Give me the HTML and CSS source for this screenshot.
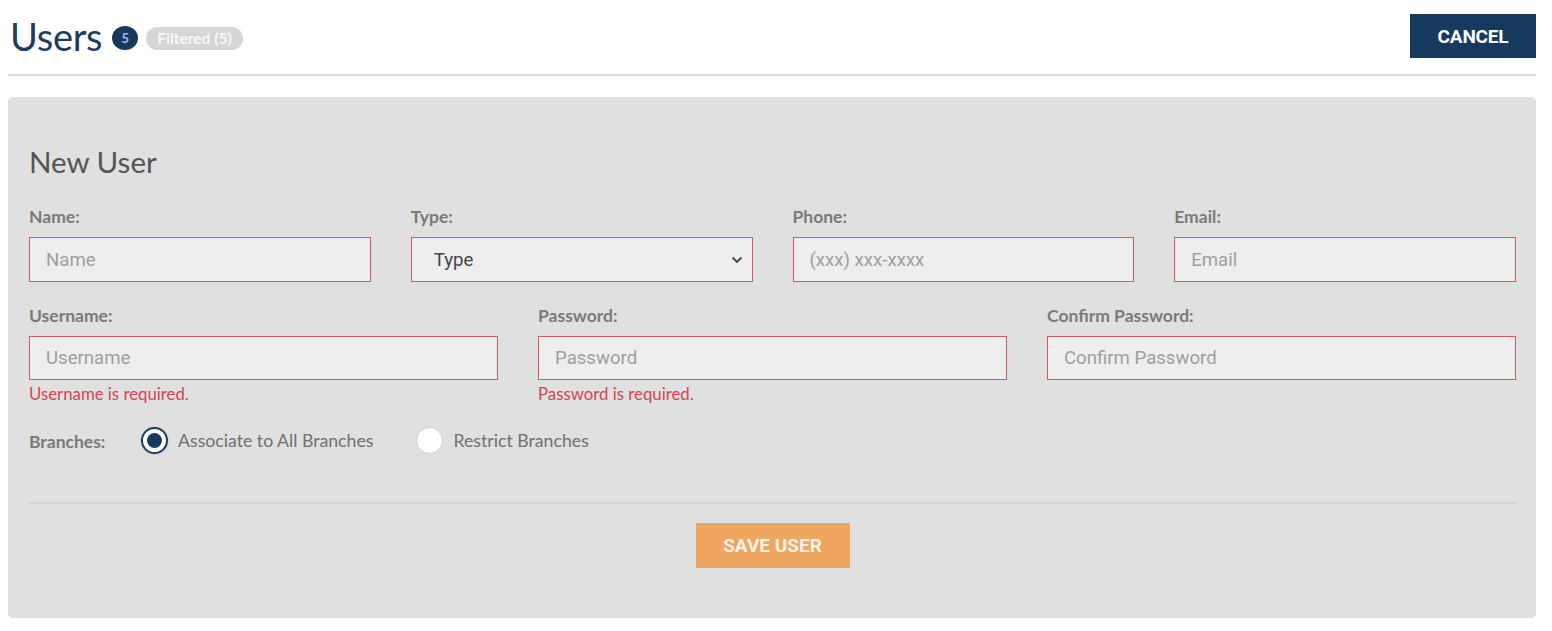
FILE: index.html
```html
<!DOCTYPE html>
<html>
<head>
<meta charset="utf-8">
<link rel="stylesheet" href="styles.css">
</head>
<body>
<div class="page">
  <header class="topbar">
    <div class="title-group">
      <h1 class="title">Users</h1>
      <span class="count-badge">5</span>
      <span class="filter-pill">Filtered (5)</span>
    </div>
    <button class="btn btn-cancel">CANCEL</button>
  </header>
  <section class="panel">
    <h2 class="panel-title">New User</h2>
    <div class="row row-4">
      <div class="field">
        <label class="label">Name:</label>
        <input class="input invalid" placeholder="Name">
      </div>
      <div class="field">
        <label class="label">Type:</label>
        <div class="select invalid">
          <span class="select-text">Type</span>
          <svg class="chev" width="12" height="8" viewBox="0 0 12 8"><path d="M1.5 1.5 L6 6 L10.5 1.5" fill="none" stroke="#444" stroke-width="1.8"/></svg>
        </div>
      </div>
      <div class="field">
        <label class="label">Phone:</label>
        <input class="input invalid" placeholder="(xxx) xxx-xxxx">
      </div>
      <div class="field">
        <label class="label">Email:</label>
        <input class="input invalid" placeholder="Email">
      </div>
    </div>
    <div class="row row-3">
      <div class="field">
        <label class="label">Username:</label>
        <input class="input invalid" placeholder="Username">
        <div class="error">Username is required.</div>
      </div>
      <div class="field">
        <label class="label">Password:</label>
        <input class="input invalid" placeholder="Password">
        <div class="error">Password is required.</div>
      </div>
      <div class="field">
        <label class="label">Confirm Password:</label>
        <input class="input invalid" placeholder="Confirm Password">
      </div>
    </div>
    <div class="branches">
      <span class="label branches-label">Branches:</span>
      <label class="radio-opt">
        <span class="radio checked"><span class="dot"></span></span>
        <span class="radio-text">Associate to All Branches</span>
      </label>
      <label class="radio-opt">
        <span class="radio"></span>
        <span class="radio-text">Restrict Branches</span>
      </label>
    </div>
    <div class="divider"></div>
    <div class="actions">
      <button class="btn btn-save">SAVE USER</button>
    </div>
  </section>
</div>
</body>
</html>
```

FILE: styles.css
```css
* { box-sizing: border-box; }
html, body { margin: 0; padding: 0; background: #fff; }
body { font-family: "Lato", "Open Sans", sans-serif; color: #555; }
.page { padding: 0 16px 0 8px; }

.topbar {
  display: flex;
  justify-content: space-between;
  align-items: center;
  padding: 14px 0 16px 2px;
  border-bottom: 2px solid #d6d6d6;
}
.title-group { display: flex; align-items: center; }
.title {
  margin: 0;
  font-size: 38px;
  font-weight: 400;
  color: #1d3d5e;
  line-height: 44px;
  letter-spacing: -0.3px;
}
.count-badge {
  display: inline-flex;
  align-items: center;
  justify-content: center;
  width: 26px;
  height: 24px;
  border-radius: 50%;
  background: #163a5f;
  color: #9fc1e4;
  font-size: 13px;
  font-weight: 700;
  margin-left: 10px;
  margin-top: 4px;
}
.filter-pill {
  display: inline-flex;
  align-items: center;
  height: 23px;
  padding: 0 11px;
  border-radius: 12px;
  background: #d6d6d6;
  color: #f6f6f6;
  font-size: 15.5px;
  font-weight: 700;
  margin-left: 8px;
  margin-top: 4px;
}
.btn {
  border: none;
  font-family: "Roboto", sans-serif;
  font-weight: 700;
  font-size: 19px;
  color: #fff;
  cursor: pointer;
}
.btn-cancel {
  background: #163a5f;
  width: 126px;
  height: 44px;
  letter-spacing: -0.2px;
}

.panel {
  margin-top: 21px;
  background: #e0e0e0;
  border-radius: 5px;
  padding: 48px 20px 50px 21px;
}
.panel-title {
  margin: 0 0 28px;
  font-size: 29.5px;
  font-weight: 400;
  color: #555;
  line-height: 34px;
}
.row { display: grid; column-gap: 40px; }
.row-4 { grid-template-columns: repeat(4, 1fr); margin-bottom: 24px; }
.row-3 { grid-template-columns: repeat(3, 1fr); }
.field { display: flex; flex-direction: column; }
.label {
  font-size: 17.5px;
  font-weight: 700;
  color: #7a7a7a;
  line-height: 20px;
  margin-bottom: 10px;
}
.input, .select {
  height: 45px;
  background: #eeeeee;
  border: 1px solid #d65a5c;
  font-family: "Roboto", sans-serif;
  font-size: 18.6px;
  color: #444;
  padding: 0 16px;
  outline: none;
  width: 100%;
}
.row-3 .input { height: 44px; }
.input::placeholder { color: #9e9e9e; }
.select {
  display: flex;
  align-items: center;
  justify-content: space-between;
  padding: 0 9px 0 22px;
}
.select-text { color: #444; }
.error {
  color: #d5454f;
  font-size: 16.8px;
  line-height: 20px;
  margin-top: 4px;
}
.branches {
  display: flex;
  align-items: center;
  margin-top: 22px;
  height: 28px;
}
.branches-label { margin: 4px 0 0 0; width: 112px; }
.radio-opt { display: flex; align-items: center; margin-right: 43px; }
.radio {
  width: 27px;
  height: 27px;
  border-radius: 50%;
  background: #fff;
  border: 1px solid #cfcfcf;
  display: inline-flex;
  align-items: center;
  justify-content: center;
}
.radio.checked { border: 2px solid #1d3d5e; box-shadow: 0 0 0 1px #c9d2dc; }
.dot { width: 15px; height: 15px; border-radius: 50%; background: #163a5f; }
.radio-text { margin-left: 10px; font-size: 17.7px; color: #707070; }
.divider { height: 2px; background: #d2d2d2; margin-top: 48px; }
.actions { display: flex; justify-content: center; padding-top: 19px; }
.btn-save {
  background: #eea660;
  width: 154px;
  height: 45px;
  color: #fdf2e6;
}
```
